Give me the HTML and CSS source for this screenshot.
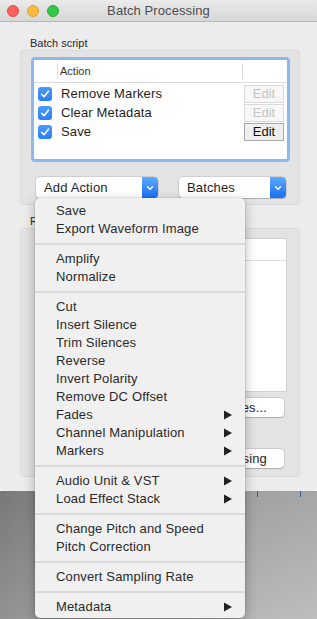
FILE: index.html
```html
<!DOCTYPE html>
<html>
<head>
<meta charset="utf-8">
<link rel="stylesheet" href="styles.css">
</head>
<body>
<div class="screen">
  <div class="window">
    <div class="titlebar">
      <div class="lights">
        <span class="light red"></span>
        <span class="light yellow"></span>
        <span class="light green"></span>
      </div>
      <div class="title">Batch Processing</div>
      <div></div>
    </div>
    <div class="content">
      <div class="group-label">Batch script</div>
      <div class="group group-script">
        <div class="table">
          <div class="thead">
            <div class="th th-check"></div>
            <div class="th th-action"><span>Action</span></div>
            <div class="th th-edit"></div>
          </div>
          <div class="row">
            <span class="cb"><svg width="14" height="14" viewBox="0 0 14 14"><path d="M3.6 7.3 L6 9.7 L10.4 4.2" fill="none" stroke="#fff" stroke-width="1.6" stroke-linecap="round" stroke-linejoin="round"/></svg></span>
            <span class="row-text">Remove Markers</span>
            <span class="edit disabled">Edit</span>
          </div>
          <div class="row">
            <span class="cb"><svg width="14" height="14" viewBox="0 0 14 14"><path d="M3.6 7.3 L6 9.7 L10.4 4.2" fill="none" stroke="#fff" stroke-width="1.6" stroke-linecap="round" stroke-linejoin="round"/></svg></span>
            <span class="row-text">Clear Metadata</span>
            <span class="edit disabled">Edit</span>
          </div>
          <div class="row">
            <span class="cb"><svg width="14" height="14" viewBox="0 0 14 14"><path d="M3.6 7.3 L6 9.7 L10.4 4.2" fill="none" stroke="#fff" stroke-width="1.6" stroke-linecap="round" stroke-linejoin="round"/></svg></span>
            <span class="row-text">Save</span>
            <span class="edit">Edit</span>
          </div>
        </div>
        <div class="popups">
          <div class="popup popup-add">
            <span class="popup-text">Add Action</span>
            <span class="popup-arrow"><svg width="8" height="6" viewBox="0 0 8 6"><path d="M1.5 1.8 L4 4.2 L6.5 1.8" fill="none" stroke="#fff" stroke-width="1.4" stroke-linecap="round" stroke-linejoin="round"/></svg></span>
          </div>
          <div class="popup popup-batches">
            <span class="popup-text">Batches</span>
            <span class="popup-arrow"><svg width="8" height="6" viewBox="0 0 8 6"><path d="M1.5 1.8 L4 4.2 L6.5 1.8" fill="none" stroke="#fff" stroke-width="1.4" stroke-linecap="round" stroke-linejoin="round"/></svg></span>
          </div>
        </div>
      </div>
      <div class="group-label results-label">Results</div>
      <div class="group group-results">
        <div class="list"><div class="list-head"></div></div>
        <div class="btn-row first"><span class="btn">Select Files...</span></div>
        <div class="btn-row second"><span class="btn">Start Processing</span></div>
      </div>
    </div>
  </div>
  <div class="desktop">
    <span class="tick"></span>
    <span class="tick"></span>
  </div>

  <div class="menu">
    <div class="mi">Save</div>
    <div class="mi">Export Waveform Image</div>
    <div class="sep"></div>
    <div class="mi">Amplify</div>
    <div class="mi">Normalize</div>
    <div class="sep"></div>
    <div class="mi">Cut</div>
    <div class="mi">Insert Silence</div>
    <div class="mi">Trim Silences</div>
    <div class="mi">Reverse</div>
    <div class="mi">Invert Polarity</div>
    <div class="mi">Remove DC Offset</div>
    <div class="mi">Fades<svg class="sub" width="8" height="10" viewBox="0 0 8 10"><path d="M0 0.5 L8 5 L0 9.5 Z" fill="#222"/></svg></div>
    <div class="mi">Channel Manipulation<svg class="sub" width="8" height="10" viewBox="0 0 8 10"><path d="M0 0.5 L8 5 L0 9.5 Z" fill="#222"/></svg></div>
    <div class="mi">Markers<svg class="sub" width="8" height="10" viewBox="0 0 8 10"><path d="M0 0.5 L8 5 L0 9.5 Z" fill="#222"/></svg></div>
    <div class="sep"></div>
    <div class="mi">Audio Unit &amp; VST<svg class="sub" width="8" height="10" viewBox="0 0 8 10"><path d="M0 0.5 L8 5 L0 9.5 Z" fill="#222"/></svg></div>
    <div class="mi">Load Effect Stack<svg class="sub" width="8" height="10" viewBox="0 0 8 10"><path d="M0 0.5 L8 5 L0 9.5 Z" fill="#222"/></svg></div>
    <div class="sep"></div>
    <div class="mi">Change Pitch and Speed</div>
    <div class="mi">Pitch Correction</div>
    <div class="sep"></div>
    <div class="mi">Convert Sampling Rate</div>
    <div class="sep"></div>
    <div class="mi">Metadata<svg class="sub" width="8" height="10" viewBox="0 0 8 10"><path d="M0 0.5 L8 5 L0 9.5 Z" fill="#222"/></svg></div>
  </div>
</div>
</body>
</html>
```

FILE: styles.css
```css
* { box-sizing: border-box; }
html, body { margin: 0; padding: 0; }
body {
  width: 317px;
  height: 619px;
  overflow: hidden;
  font-family: "Liberation Sans", Arial, sans-serif;
  color: #222;
}
.screen {
  position: relative;
  width: 317px;
  height: 619px;
  display: flex;
  flex-direction: column;
}
.window {
  height: 491px;
  background: #ececec;
  border-radius: 0 0 4px 4px;
  display: flex;
  flex-direction: column;
}
.titlebar {
  height: 22px;
  display: grid;
  grid-template-columns: 1fr auto 1fr;
  align-items: center;
  background: linear-gradient(#ebebeb, #d6d6d6);
  border-bottom: 1px solid #b6b6b6;
}
.lights { display: flex; gap: 8px; padding-left: 7px; }
.light {
  width: 12px; height: 12px; border-radius: 50%;
  display: block;
}
.red { background: #fc605c; border: 0.5px solid #de4a44; }
.yellow { background: #fdbc40; border: 0.5px solid #de9f34; }
.green { background: #34c84a; border: 0.5px solid #27aa35; }
.title {
  font-size: 13px;
  color: #4c4c4c;
  letter-spacing: 0.1px;
  line-height: 16px;
}
.content {
  padding: 0 17px 0 20px;
}
.group-label {
  font-size: 11px;
  line-height: 14px;
  padding-left: 10px;
  color: #2a2a2a;
  margin-top: 14px;
}
.results-label { margin-top: 9px; }
.group {
  background: #e3e3e3;
  border: 1px solid #d9d9d9;
  border-radius: 4px;
}
.group-script {
  height: 155px;
  padding: 6px 9px 6px 10px;
}
.table {
  height: 105px;
  border: 3px solid #90b6f0;
  border-radius: 4px;
  background: #fff;
}
.thead {
  height: 23px;
  display: grid;
  grid-template-columns: 23px 1fr 45px;
  border-bottom: 1px solid #dcdcdc;
  align-items: center;
}
.th { height: 16px; }
.th-action, .th-edit { border-left: 1px solid #dcdcdc; }
.th-action {
  font-size: 11px;
  line-height: 16px;
  padding-left: 2px;
  color: #333;
}
.row {
  height: 19px;
  display: grid;
  grid-template-columns: 23px 1fr 45px;
  align-items: center;
}
.thead + .row { margin-top: 1px; }
.cb {
  width: 14px; height: 14px;
  margin-left: 4px;
  border-radius: 3px;
  background: linear-gradient(#4b9cfa, #2a7ef5);
  display: block;
}
.cb svg { display: block; }
.row-text {
  font-size: 13px;
  padding-left: 4px;
  color: #1e1e1e;
  letter-spacing: 0.15px;
}
.edit {
  width: 40px;
  height: 18px;
  margin-left: 2px;
  font-size: 13px;
  line-height: 16px;
  text-align: center;
  border: 1px solid #a9a9a9;
  background: #efefef;
  color: #111;
}
.edit.disabled {
  color: #c4c4c4;
  border-color: #dadada;
  background: #f7f7f7;
}
.popups {
  margin-top: 15px;
  display: flex;
  gap: 21px;
  padding-left: 5px;
}
.popup {
  height: 21px;
  background: #fff;
  border-radius: 4px;
  box-shadow: 0 0 0 0.5px rgba(0,0,0,0.18), 0 1px 1px rgba(0,0,0,0.15);
  display: flex;
  align-items: stretch;
}
.popup-add { width: 122px; }
.popup-batches { width: 107px; }
.popup-text {
  flex: 1;
  font-size: 13px;
  line-height: 21px;
  padding-left: 8px;
  color: #1e1e1e;
  letter-spacing: 0.15px;
}
.popup-arrow {
  width: 16px;
  border-radius: 0 4px 4px 0;
  background: linear-gradient(#5ea9fd, #1870f1);
  display: flex;
  align-items: center;
  justify-content: center;
}
.popup-arrow svg { display: block; }
.group-results {
  height: 249px;
  padding: 9px 12px 0 19px;
}
.list {
  height: 154px;
  background: #fff;
  border: 1px solid #d0d0d0;
}
.list-head {
  height: 22px;
  border-bottom: 1px solid #dcdcdc;
}
.btn-row { display: flex; justify-content: flex-end; padding-right: 3px; }
.btn-row.first { margin-top: 6px; }
.btn-row.second { margin-top: 32px; }
.btn {
  width: 120px;
  height: 19px;
  background: #fff;
  border-radius: 4px;
  box-shadow: 0 0 0 0.5px rgba(0,0,0,0.2), 0 1px 1px rgba(0,0,0,0.15);
  font-size: 13px;
  line-height: 19px;
  text-align: right;
  padding-right: 17px;
  color: #1e1e1e;
  letter-spacing: 0.15px;
}
.desktop {
  flex: 1;
  background:
    linear-gradient(180deg, rgba(0,0,0,0.08), rgba(255,255,255,0.12)),
    linear-gradient(90deg, #828282 0%, #a0a0a0 35%, #acacac 70%, #b4b4b4 100%);
  display: flex;
  gap: 42px;
  padding-left: 257px;
  align-items: flex-start;
}
.tick {
  width: 1px;
  height: 6px;
  background: #2a5d9a;
  display: block;
}
.menu {
  position: absolute;
  left: 35px;
  top: 198px;
  width: 210px;
  padding: 4px 0 2px;
  background: #f0f0f0;
  border-radius: 5px;
  box-shadow: 0 0 0 0.5px rgba(0,0,0,0.12), 0 4px 12px rgba(0,0,0,0.3);
}
.mi {
  height: 18px;
  line-height: 18px;
  font-size: 13px;
  padding-left: 21px;
  padding-right: 13px;
  color: #2a2a2a;
  letter-spacing: 0.15px;
  display: flex;
  align-items: center;
  justify-content: space-between;
}
.sub { display: block; }
.sep {
  height: 12px;
  display: flex;
  align-items: center;
}
.sep::before {
  content: "";
  display: block;
  width: 100%;
  height: 2px;
  background: #dadada;
}
```
